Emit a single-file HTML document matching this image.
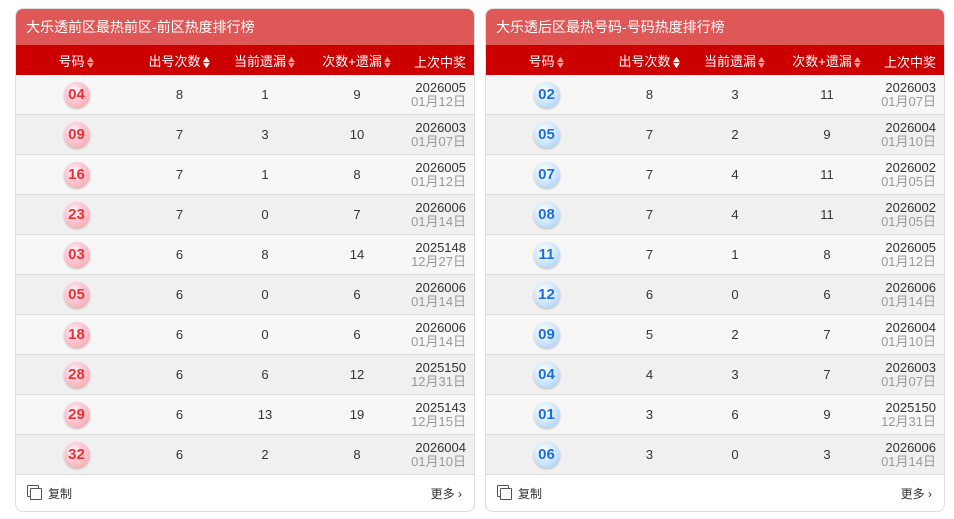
<!DOCTYPE html><html><head><meta charset="utf-8"><style>
body{margin:0;background:#fff;font-family:"Liberation Sans","Noto Sans CJK SC",sans-serif;width:954px;height:519px;overflow:hidden;position:relative}
.p{position:absolute;top:8px;width:460px;height:504px;border:1px solid #ddd;border-radius:8px;overflow:hidden;box-sizing:border-box;background:#fff}
.t{height:36px;background:#df5858;color:#fff;font-size:14px;line-height:36px;padding-left:10px}
.h,.r{display:flex;align-items:center}
.h{height:30px;background:#cc0000;color:#fff;font-size:13px}
.r{height:40px;border-bottom:1px solid #ddd;box-sizing:border-box;font-size:13px;color:#333}
.r:nth-child(odd){background:#f7f7f7}.r:nth-child(even){background:#f0f0f0}
.c1{width:121px;text-align:center}.c2{width:85px;text-align:center}.c3{width:86px;text-align:center}.c4{width:98px;text-align:center}.c5{width:60px;text-align:right;line-height:14px}
.h .c5{line-height:normal;text-align:center;width:68px;margin-top:2px}
.s{display:inline-block;font-size:9px;vertical-align:middle;line-height:6px;color:#f99;margin-left:1px;transform:scaleX(1.3)}
.b{display:inline-block;width:26px;height:26px;border-radius:50%;line-height:26px;font-weight:bold;font-size:15px;text-align:center;box-shadow:0 1px 2px rgba(0,0,0,.25)}
.red .b{background:radial-gradient(circle at 40% 35%,#fff 0%,#fcd 35%,#f5a0a0 100%);color:#ec3030}
.blue .b{background:radial-gradient(circle at 40% 35%,#fff 0%,#dfefff 35%,#9cc8f2 100%);color:#1a6ee0}
.d{color:#999}
.f{height:36px;display:flex;justify-content:space-between;align-items:center;padding:0 12px 0 11px;font-size:12px;color:#333}
.cp{display:inline-block;width:10px;height:10px;border:1px solid #555;position:relative;margin-right:6px;margin-left:3px;vertical-align:-2px;border-radius:1px;background:#fff;box-shadow:-3px -3px 0 -1px #fff,-3px -3px 0 0 #555}
</style></head><body>
<div class="p red" style="left:15px"><div class="t">大乐透前区最热前区-前区热度排行榜</div>
<div class="h"><div class="c1">号码<span class="s">▲<br>▼</span></div><div class="c2">出号次数<span class="s" style="color:#fff">▲<br>▼</span></div><div class="c3">当前遗漏<span class="s">▲<br>▼</span></div><div class="c4">次数+遗漏<span class="s">▲<br>▼</span></div><div class="c5">上次中奖</div></div>
<div>
<div class="r"><div class="c1"><span class="b">04</span></div><div class="c2">8</div><div class="c3">1</div><div class="c4">9</div><div class="c5">2026005<br><span class="d">01月12日</span></div></div>
<div class="r"><div class="c1"><span class="b">09</span></div><div class="c2">7</div><div class="c3">3</div><div class="c4">10</div><div class="c5">2026003<br><span class="d">01月07日</span></div></div>
<div class="r"><div class="c1"><span class="b">16</span></div><div class="c2">7</div><div class="c3">1</div><div class="c4">8</div><div class="c5">2026005<br><span class="d">01月12日</span></div></div>
<div class="r"><div class="c1"><span class="b">23</span></div><div class="c2">7</div><div class="c3">0</div><div class="c4">7</div><div class="c5">2026006<br><span class="d">01月14日</span></div></div>
<div class="r"><div class="c1"><span class="b">03</span></div><div class="c2">6</div><div class="c3">8</div><div class="c4">14</div><div class="c5">2025148<br><span class="d">12月27日</span></div></div>
<div class="r"><div class="c1"><span class="b">05</span></div><div class="c2">6</div><div class="c3">0</div><div class="c4">6</div><div class="c5">2026006<br><span class="d">01月14日</span></div></div>
<div class="r"><div class="c1"><span class="b">18</span></div><div class="c2">6</div><div class="c3">0</div><div class="c4">6</div><div class="c5">2026006<br><span class="d">01月14日</span></div></div>
<div class="r"><div class="c1"><span class="b">28</span></div><div class="c2">6</div><div class="c3">6</div><div class="c4">12</div><div class="c5">2025150<br><span class="d">12月31日</span></div></div>
<div class="r"><div class="c1"><span class="b">29</span></div><div class="c2">6</div><div class="c3">13</div><div class="c4">19</div><div class="c5">2025143<br><span class="d">12月15日</span></div></div>
<div class="r"><div class="c1"><span class="b">32</span></div><div class="c2">6</div><div class="c3">2</div><div class="c4">8</div><div class="c5">2026004<br><span class="d">01月10日</span></div></div>
</div><div class="f"><span><span class="cp"></span>复制</span><span>更多 ›</span></div></div>
<div class="p blue" style="left:485px"><div class="t">大乐透后区最热号码-号码热度排行榜</div>
<div class="h"><div class="c1">号码<span class="s">▲<br>▼</span></div><div class="c2">出号次数<span class="s" style="color:#fff">▲<br>▼</span></div><div class="c3">当前遗漏<span class="s">▲<br>▼</span></div><div class="c4">次数+遗漏<span class="s">▲<br>▼</span></div><div class="c5">上次中奖</div></div>
<div>
<div class="r"><div class="c1"><span class="b">02</span></div><div class="c2">8</div><div class="c3">3</div><div class="c4">11</div><div class="c5">2026003<br><span class="d">01月07日</span></div></div>
<div class="r"><div class="c1"><span class="b">05</span></div><div class="c2">7</div><div class="c3">2</div><div class="c4">9</div><div class="c5">2026004<br><span class="d">01月10日</span></div></div>
<div class="r"><div class="c1"><span class="b">07</span></div><div class="c2">7</div><div class="c3">4</div><div class="c4">11</div><div class="c5">2026002<br><span class="d">01月05日</span></div></div>
<div class="r"><div class="c1"><span class="b">08</span></div><div class="c2">7</div><div class="c3">4</div><div class="c4">11</div><div class="c5">2026002<br><span class="d">01月05日</span></div></div>
<div class="r"><div class="c1"><span class="b">11</span></div><div class="c2">7</div><div class="c3">1</div><div class="c4">8</div><div class="c5">2026005<br><span class="d">01月12日</span></div></div>
<div class="r"><div class="c1"><span class="b">12</span></div><div class="c2">6</div><div class="c3">0</div><div class="c4">6</div><div class="c5">2026006<br><span class="d">01月14日</span></div></div>
<div class="r"><div class="c1"><span class="b">09</span></div><div class="c2">5</div><div class="c3">2</div><div class="c4">7</div><div class="c5">2026004<br><span class="d">01月10日</span></div></div>
<div class="r"><div class="c1"><span class="b">04</span></div><div class="c2">4</div><div class="c3">3</div><div class="c4">7</div><div class="c5">2026003<br><span class="d">01月07日</span></div></div>
<div class="r"><div class="c1"><span class="b">01</span></div><div class="c2">3</div><div class="c3">6</div><div class="c4">9</div><div class="c5">2025150<br><span class="d">12月31日</span></div></div>
<div class="r"><div class="c1"><span class="b">06</span></div><div class="c2">3</div><div class="c3">0</div><div class="c4">3</div><div class="c5">2026006<br><span class="d">01月14日</span></div></div>
</div><div class="f"><span><span class="cp"></span>复制</span><span>更多 ›</span></div></div>
</body></html>
